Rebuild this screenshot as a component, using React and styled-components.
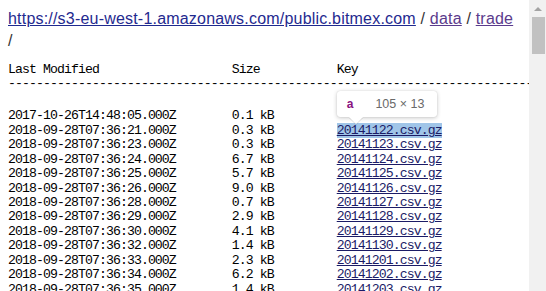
import React from "react";
import styled, { createGlobalStyle } from "styled-components";

const GlobalStyle = createGlobalStyle`
  html, body {
    margin: 0;
    background: #fff;
    color: #000;
    overflow: hidden;
  }
`;

const Page = styled.div`
  display: flex;
  height: 100vh;
  overflow: hidden;
`;

const Content = styled.main`
  flex: 1;
  min-width: 0;
  padding: 8px;
  overflow: hidden;
`;

const Scrollbar = styled.div`
  width: 17px;
  flex: none;
  background: #f1f1f1;
  display: flex;
  flex-direction: column;
  align-items: center;
`;

const ArrowUp = styled.div`
  height: 17px;
  width: 17px;
  display: flex;
  align-items: center;
  justify-content: center;

  &::before {
    content: "";
    border-left: 4px solid transparent;
    border-right: 4px solid transparent;
    border-bottom: 4px solid #a3a3a3;
    margin-top: 1px;
  }
`;

const Thumb = styled.div`
  width: 13px;
  height: 37px;
  margin-left: 2px;
  background: #c1c1c1;
`;

const Crumbs = styled.div`
  font-family: "Liberation Sans", Arial, sans-serif;
  font-size: 16px;
  letter-spacing: 0.2px;
  line-height: 22px;
`;

const Crumb = styled.a`
  color: ${(p) => (p.$visited ? "#5b3b8c" : "#1f2a8f")};
  text-decoration: underline;
`;

const Sep = styled.span`
  color: #333;
`;

const Listing = styled.pre`
  margin: 11px -8px 0 0;
  font-family: "Liberation Mono", "Courier New", monospace;
  font-size: 13.2px;
  letter-spacing: -0.92px;
  line-height: 14.45px;
  white-space: pre;
  overflow: hidden;
`;

const Row = styled.div`
  height: ${(p) => p.$h || 14.45}px;
`;

const KeyCell = styled.span`
  position: relative;
`;

const FileLink = styled.a`
  color: #1b1b66;
  text-decoration: underline;
  background: ${(p) => (p.$inspected ? "#a0c5e8" : "transparent")};
`;

const Tip = styled.div`
  position: absolute;
  left: 0;
  bottom: 21px;
  width: 100px;
  height: 26px;
  box-sizing: border-box;
  padding: 0 0 0 10px;
  display: flex;
  align-items: center;
  gap: 22px;
  background: #fff;
  border-radius: 3px;
  box-shadow: 0 1px 4px rgba(0, 0, 0, 0.22), 0 0 1px rgba(0, 0, 0, 0.18);
  font-family: "Liberation Sans", Arial, sans-serif;
  font-size: 12px;
  letter-spacing: 0;
  white-space: nowrap;

  &::after {
    content: "";
    position: absolute;
    left: 12px;
    bottom: -7px;
    border-left: 7px solid transparent;
    border-right: 7px solid transparent;
    border-top: 7px solid #fff;
    filter: drop-shadow(0 1px 0 rgba(0, 0, 0, 0.12));
  }
`;

const TipTag = styled.span`
  color: #881280;
  font-weight: bold;
`;

const TipSize = styled.span`
  color: #6a6a6a;
  font-size: 12.5px;
`;

const pad = (s, n) => s + " ".repeat(Math.max(0, n - s.length));

const rows = [
  ["2017-10-26T14:48:05.000Z", "0.1 kB", ""],
  ["2018-09-28T07:36:21.000Z", "0.3 kB", "20141122.csv.gz"],
  ["2018-09-28T07:36:23.000Z", "0.3 kB", "20141123.csv.gz"],
  ["2018-09-28T07:36:24.000Z", "6.7 kB", "20141124.csv.gz"],
  ["2018-09-28T07:36:25.000Z", "5.7 kB", "20141125.csv.gz"],
  ["2018-09-28T07:36:26.000Z", "9.0 kB", "20141126.csv.gz"],
  ["2018-09-28T07:36:28.000Z", "0.7 kB", "20141127.csv.gz"],
  ["2018-09-28T07:36:29.000Z", "2.9 kB", "20141128.csv.gz"],
  ["2018-09-28T07:36:30.000Z", "4.1 kB", "20141129.csv.gz"],
  ["2018-09-28T07:36:32.000Z", "1.4 kB", "20141130.csv.gz"],
  ["2018-09-28T07:36:33.000Z", "2.3 kB", "20141201.csv.gz"],
  ["2018-09-28T07:36:34.000Z", "6.2 kB", "20141202.csv.gz"],
  ["2018-09-28T07:36:35.000Z", "1.4 kB", "20141203.csv.gz"],
];

export default function App() {
  return (
    <Page>
      <GlobalStyle />
      <Content>
        <Crumbs>
          <Crumb href="#">https://s3-eu-west-1.amazonaws.com/public.bitmex.com</Crumb>
          <Sep> / </Sep>
          <Crumb href="#" $visited>data</Crumb>
          <Sep> / </Sep>
          <Crumb href="#" $visited>trade</Crumb>
          <br />
          <Sep>/</Sep>
        </Crumbs>
        <Listing>
          <Row>{pad("Last Modified", 32) + pad("Size", 15) + "Key"}</Row>
          <Row>{"-".repeat(80)}</Row>
          <Row $h={17.5} />
          {rows.map(([modified, size, key], i) => (
            <Row key={i}>
              {pad(modified, 32) + pad(size, 15)}
              {key && (
                <KeyCell>
                  {i === 1 && (
                    <Tip>
                      <TipTag>a</TipTag>
                      <TipSize>105 × 13</TipSize>
                    </Tip>
                  )}
                  <FileLink href="#" $inspected={i === 1}>{key}</FileLink>
                </KeyCell>
              )}
            </Row>
          ))}
        </Listing>
      </Content>
      <Scrollbar>
        <ArrowUp />
        <Thumb />
      </Scrollbar>
    </Page>
  );
}
